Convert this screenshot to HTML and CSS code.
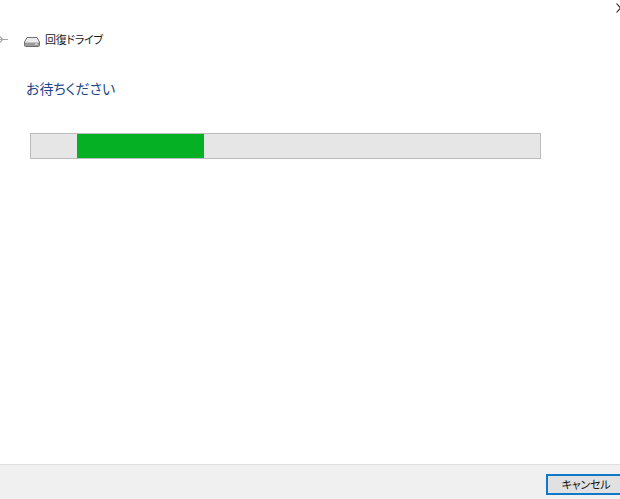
FILE: index.html
```html
<!DOCTYPE html>
<html lang="ja">
<head>
<meta charset="utf-8">
<title>回復ドライブ</title>
<link rel="stylesheet" href="styles.css">
</head>
<body>
<div class="window">
  <svg class="close" width="6" height="11" viewBox="0 0 6 11"><path d="M0.5 0.5 L4.5 5 L0.5 9.5" fill="none" stroke="#222" stroke-width="1.1"/></svg>
  <main class="content">
    <header class="nav">
      <svg class="back" width="8" height="9" viewBox="0 0 8 9"><path d="M0 4.5 H8 M0 1.5 L2.5 4.5 L0 7.5" fill="none" stroke="#a8a8a8" stroke-width="1.2"/></svg>
      <svg class="drive" width="16" height="10" viewBox="0 0 16 10">
        <path d="M3 0.5 H13 L15.5 5 V8.5 Q15.5 9.5 14.5 9.5 H1.5 Q0.5 9.5 0.5 8.5 V5 Z" fill="#ececec" stroke="#6d6d6d" stroke-width="1"/>
        <path d="M1 5.5 H15 V9 H1 Z" fill="#9a9a9a"/>
        <rect x="11" y="6.5" width="2.5" height="1.2" fill="#e8e8e8"/>
      </svg>
      <span class="nav-title">回復ドライブ</span>
    </header>
    <h1 class="heading">お待ちください</h1>
    <div class="progress"><div class="progress-fill"></div></div>
  </main>
  <footer class="footer">
    <button class="cancel" type="button">キャンセル</button>
  </footer>
</div>
</body>
</html>
```
FILE: styles.css
```css
html, body {
  margin: 0;
  padding: 0;
  background: #fff;
}
body {
  font-family: "Noto Sans CJK JP", "Noto Sans", sans-serif;
  font-feature-settings: "palt";
  overflow: hidden;
}
.window {
  position: relative;
  width: 620px;
  height: 499px;
  display: flex;
  flex-direction: column;
  overflow: hidden;
}
.close {
  position: absolute;
  top: 3px;
  right: -2px;
}
.content {
  flex: 1;
  padding-top: 31px;
}
.nav {
  display: flex;
  align-items: center;
  height: 17px;
}
.back {
  flex: none;
}
.drive {
  flex: none;
  margin-left: 16px;
  margin-top: 5px;
}
.nav-title {
  margin-left: 5px;
  font-size: 11px;
  letter-spacing: -0.3px;
  line-height: 17px;
  color: #1a1a1a;
}
.heading {
  margin: 30px 0 0 26px;
  font-size: 14px;
  line-height: 20px;
  font-weight: 400;
  color: #1c4587;
}
.progress {
  box-sizing: border-box;
  width: 511px;
  height: 26px;
  margin: 35px 0 0 30px;
  padding-left: 46px;
  background: #e6e6e6;
  border: 1px solid #bcbcbc;
}
.progress-fill {
  width: 127px;
  height: 24px;
  background: #06b025;
}
.footer {
  box-sizing: border-box;
  height: 35px;
  display: flex;
  justify-content: flex-end;
  padding-top: 9px;
  background: #f0f0f0;
  border-top: 1px solid #dfdfdf;
}
.cancel {
  box-sizing: border-box;
  width: 74px;
  height: 21px;
  padding: 0 0 0 4px;
  background: #e1e1e1;
  border: 2px solid #0f78c8;
  border-right: none;
  font-family: inherit;
  font-feature-settings: inherit;
  font-size: 11px;
  letter-spacing: -0.2px;
  line-height: 17px;
  color: #111;
}
```
